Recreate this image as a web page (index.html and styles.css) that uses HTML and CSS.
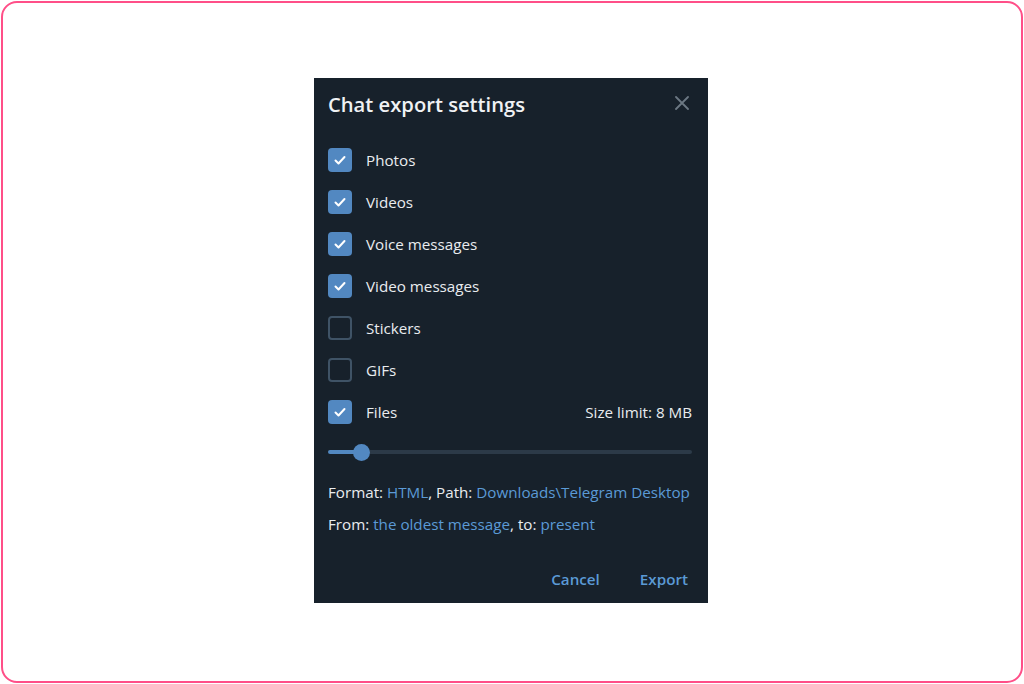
FILE: index.html
```html
<!DOCTYPE html>
<html>
<head>
<meta charset="utf-8">
<link rel="stylesheet" href="styles.css">
</head>
<body>
<div class="frame">
  <div class="dialog">
    <div class="header">
      <div class="title">Chat export settings</div>
      <svg class="close" width="14" height="14" viewBox="0 0 14 14"><path d="M1 1L13 13M13 1L1 13" stroke="#6c7883" stroke-width="1.8" stroke-linecap="round"/></svg>
    </div>
    <div class="row"><span class="cb on"><svg viewBox="0 0 24 24" width="24" height="24"><path d="M7.5 12.5l3 3 6-6.5" fill="none" stroke="#fff" stroke-width="2" stroke-linecap="round" stroke-linejoin="round"/></svg></span><span class="label">Photos</span></div>
    <div class="row"><span class="cb on"><svg viewBox="0 0 24 24" width="24" height="24"><path d="M7.5 12.5l3 3 6-6.5" fill="none" stroke="#fff" stroke-width="2" stroke-linecap="round" stroke-linejoin="round"/></svg></span><span class="label">Videos</span></div>
    <div class="row"><span class="cb on"><svg viewBox="0 0 24 24" width="24" height="24"><path d="M7.5 12.5l3 3 6-6.5" fill="none" stroke="#fff" stroke-width="2" stroke-linecap="round" stroke-linejoin="round"/></svg></span><span class="label">Voice messages</span></div>
    <div class="row"><span class="cb on"><svg viewBox="0 0 24 24" width="24" height="24"><path d="M7.5 12.5l3 3 6-6.5" fill="none" stroke="#fff" stroke-width="2" stroke-linecap="round" stroke-linejoin="round"/></svg></span><span class="label">Video messages</span></div>
    <div class="row"><span class="cb off"></span><span class="label">Stickers</span></div>
    <div class="row"><span class="cb off"></span><span class="label">GIFs</span></div>
    <div class="row"><span class="cb on"><svg viewBox="0 0 24 24" width="24" height="24"><path d="M7.5 12.5l3 3 6-6.5" fill="none" stroke="#fff" stroke-width="2" stroke-linecap="round" stroke-linejoin="round"/></svg></span><span class="label">Files</span><span class="limit">Size limit: 8 MB</span></div>
    <div class="slider">
      <div class="track-fill"></div>
      <div class="knob"></div>
      <div class="track-rest"></div>
    </div>
    <div class="info">Format: <span class="link">HTML</span>, Path: <span class="link">Downloads\Telegram Desktop</span></div>
    <div class="info">From: <span class="link">the oldest message</span>, to: <span class="link">present</span></div>
    <div class="buttons">
      <span class="btn">Cancel</span>
      <span class="btn">Export</span>
    </div>
  </div>
</div>
</body>
</html>
```

FILE: styles.css
```css
html, body {
  margin: 0;
  padding: 0;
  background: #ffffff;
}
body {
  font-family: "Open Sans", "Noto Sans", sans-serif;
}
.frame {
  box-sizing: border-box;
  width: 1022px;
  height: 682px;
  margin: 1px;
  border: 2px solid #ff4f88;
  border-radius: 16px;
  display: flex;
  justify-content: center;
  align-items: flex-start;
  padding-top: 75px;
  padding-right: 2px;
}
.dialog {
  box-sizing: border-box;
  width: 394px;
  height: 525px;
  background: #17212b;
  padding: 0 16px 0 14px;
  display: flex;
  flex-direction: column;
}
.header {
  display: flex;
  align-items: center;
  justify-content: space-between;
  height: 24px;
  margin-top: 14px;
  margin-bottom: 23px;
}
.title {
  color: #f0f2f4;
  font-size: 20.2px;
  font-weight: 600;
  line-height: 24px;
}
.close {
  margin-right: 3px;
  margin-top: -2px;
}
.row {
  height: 42px;
  display: flex;
  align-items: center;
}
.cb {
  box-sizing: border-box;
  width: 24px;
  height: 24px;
  border-radius: 4px;
  flex: none;
}
.cb svg { display: block; }
.cb.on {
  background: #5288c1;
}
.cb.off {
  border: 2px solid #3f5366;
}
.label {
  margin-left: 14px;
  color: #e9ecef;
  font-size: 15.2px;
  margin-top: -1px;
}
.limit {
  margin-left: auto;
  color: #e9ecef;
  font-size: 15.2px;
  margin-top: -1px;
}
.slider {
  margin-top: 9px;
  height: 20px;
  display: flex;
  align-items: center;
}
.track-fill {
  width: 26px;
  height: 4px;
  background: #5288c1;
  border-radius: 2px 0 0 2px;
}
.knob {
  width: 17px;
  height: 17px;
  border-radius: 50%;
  background: #5288c1;
  margin: 0 -1px 0 -1px;
  position: relative;
  z-index: 1;
}
.track-rest {
  flex: 1;
  height: 4px;
  background: #2c3a48;
  border-radius: 0 2px 2px 0;
}
.info {
  color: #e9ecef;
  font-size: 15.2px;
  line-height: 32px;
}
.slider + .info {
  margin-top: 14px;
}
.link {
  color: #5b9ad6;
}
.buttons {
  margin-top: 21px;
  height: 36px;
  display: flex;
  justify-content: flex-end;
  align-items: center;
  gap: 40px;
  padding-right: 4px;
}
.btn {
  color: #5b9ad6;
  font-weight: 600;
  font-size: 15.2px;
}
```
